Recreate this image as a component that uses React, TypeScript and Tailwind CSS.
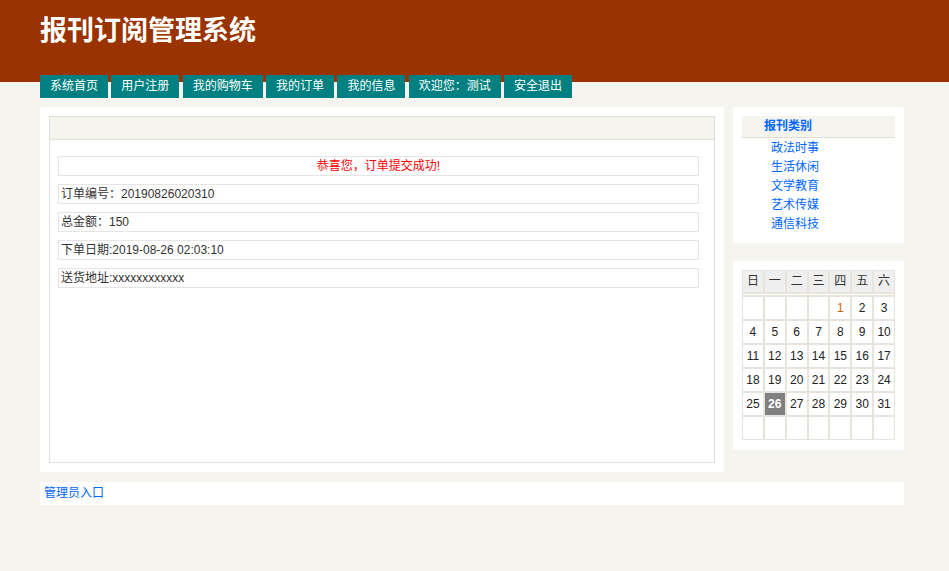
import React from "react";

const navItems = ["系统首页", "用户注册", "我的购物车", "我的订单", "我的信息", "欢迎您：测试", "安全退出"];
const categories = ["政法时事", "生活休闲", "文学教育", "艺术传媒", "通信科技"];
const weekDays = ["日", "一", "二", "三", "四", "五", "六"];

const orderRows = [
  "订单编号：20190826020310",
  "总金额：150",
  "下单日期:2019-08-26 02:03:10",
  "送货地址:xxxxxxxxxxxx",
];

// August 2019 starts on a Thursday
const days: (number | null)[] = [
  ...Array(4).fill(null),
  ...Array.from({ length: 31 }, (_, i) => i + 1),
];
while (days.length < 42) days.push(null);

const font = "font-['Liberation_Sans','Noto_Sans_CJK_SC',sans-serif]";

function Calendar() {
  return (
    <div className="w-[153px] bg-[#e6e4dd] p-[1px]">
      <div className="grid grid-cols-7 gap-[2px]">
        {weekDays.map((d) => (
          <div key={d} className="h-[21px] bg-[#efefef] text-center text-[12px] leading-[21px] text-[#333]">
            {d}
          </div>
        ))}
      </div>
      <div className="my-[2px] h-[1px] bg-white" />
      <div className="grid grid-cols-7 gap-[2px]">
        {days.map((d, i) => {
          const today = d === 26;
          return (
            <div
              key={i}
              className={
                today
                  ? "h-[22px] bg-[#808080] text-center text-[12px] font-bold leading-[22px] text-white"
                  : d === 1
                  ? "h-[22px] bg-white text-center text-[12px] leading-[22px] text-[#cc6600]"
                  : "h-[22px] bg-white text-center text-[12px] leading-[22px] text-[#222]"
              }
            >
              {d ?? ""}
            </div>
          );
        })}
      </div>
    </div>
  );
}

export default function App() {
  return (
    <div className={`min-h-[571px] bg-[#f5f4ef] ${font}`}>
      <header className="h-[82px] bg-[#993300] pl-[40px] pt-[14px]">
        <h1 className="text-[27px] font-bold leading-[34px] text-white">报刊订阅管理系统</h1>
      </header>

      <nav className="-mt-[7px] ml-[40px] flex gap-[3.33px]">
        {navItems.map((item) => (
          <a key={item} className="h-[23px] bg-[#008080] px-[10px] text-[12px] leading-[23px] text-white">
            {item}
          </a>
        ))}
      </nav>

      <div className="ml-[40px] mt-[9px] flex w-[864px] items-start gap-[9px]">
        <main className="h-[365px] w-[684px] bg-white p-[9px]">
          <div className="h-full border border-[#e0e0e0]">
            <div className="h-[23px] border-b border-[#e0e0e0] bg-[#f5f4ef]" />
            <div className="ml-[8px] flex w-[641px] flex-col gap-[8px] pt-[16px] text-[12px] text-[#333]">
              <div className="h-[20px] border border-[#e5e5e5] text-center leading-[18px] text-[#ff0000]">
                恭喜您，订单提交成功!
              </div>
              {orderRows.map((r) => (
                <div key={r} className="h-[20px] border border-[#e5e5e5] pl-[2px] leading-[18px]">
                  {r}
                </div>
              ))}
            </div>
          </div>
        </main>

        <aside className="flex w-[171px] flex-col gap-[18px]">
          <div className="bg-white p-[9px]">
            <div className="h-[22px] border-b border-[#e0ddd5] bg-[#f5f4ef] pl-[22px] text-[12px] font-bold leading-[21px] text-[#0066ff]">
              报刊类别
            </div>
            <ul className="pl-[29px] pt-[1px] text-[12px] leading-[19px] text-[#0066ff]">
              {categories.map((c) => (
                <li key={c}>{c}</li>
              ))}
            </ul>
          </div>
          <div className="bg-white px-[9px] pb-[10px] pt-[9px]">
            <Calendar />
          </div>
        </aside>
      </div>

      <footer className="ml-[40px] mt-[10px] h-[23px] w-[864px] bg-white pl-[4px] text-[12px] leading-[23px] text-[#0066ff]">
        管理员入口
      </footer>
    </div>
  );
}
